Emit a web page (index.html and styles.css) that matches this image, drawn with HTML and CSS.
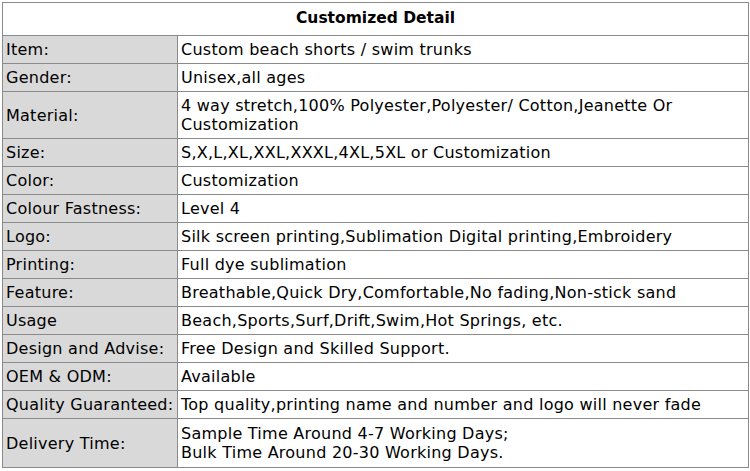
FILE: index.html
```html
<!DOCTYPE html>
<html>
<head>
<meta charset="utf-8">
<link rel="stylesheet" href="styles.css">
</head>
<body>
<table class="spec">
  <colgroup><col class="c1"><col class="c2"></colgroup>
  <tr><th class="head" colspan="2">Customized Detail</th></tr>
  <tr><td class="label">Item:</td><td class="value">Custom beach shorts / swim trunks</td></tr>
  <tr><td class="label">Gender:</td><td class="value">Unisex,all ages</td></tr>
  <tr class="double"><td class="label">Material:</td><td class="value">4 way stretch,100% Polyester,Polyester/ Cotton,Jeanette Or<br>Customization</td></tr>
  <tr><td class="label">Size:</td><td class="value">S,X,L,XL,XXL,XXXL,4XL,5XL or Customization</td></tr>
  <tr><td class="label">Color:</td><td class="value">Customization</td></tr>
  <tr><td class="label">Colour Fastness:</td><td class="value">Level 4</td></tr>
  <tr><td class="label">Logo:</td><td class="value">Silk screen printing,Sublimation Digital printing,Embroidery</td></tr>
  <tr><td class="label">Printing:</td><td class="value">Full dye sublimation</td></tr>
  <tr><td class="label">Feature:</td><td class="value">Breathable,Quick Dry,Comfortable,No fading,Non-stick sand</td></tr>
  <tr><td class="label">Usage</td><td class="value">Beach,Sports,Surf,Drift,Swim,Hot Springs, etc.</td></tr>
  <tr><td class="label">Design and Advise:</td><td class="value">Free Design and Skilled Support.</td></tr>
  <tr><td class="label">OEM &amp; ODM:</td><td class="value">Available</td></tr>
  <tr><td class="label">Quality Guaranteed:</td><td class="value">Top quality,printing name and number and logo will never fade</td></tr>
  <tr class="tall"><td class="label">Delivery Time:</td><td class="value">Sample Time Around 4-7 Working Days;<br>Bulk Time Around 20-30 Working Days.</td></tr>
</table>
</body>
</html>
```

FILE: styles.css
```css
html, body {
  margin: 0;
  padding: 0;
  background: #ffffff;
}
body {
  padding: 2px;
  font-family: "DejaVu Sans", Verdana, sans-serif;
  font-size: 16px;
  letter-spacing: 0.25px;
  color: #000000;
}
.spec {
  border-collapse: collapse;
  width: 746px;
  table-layout: fixed;
}
.spec .c1 {
  width: 175px;
}
.spec .c2 {
  width: 571px;
}
.spec th,
.spec td {
  border: 1px solid #8a8a8a;
  line-height: 19px;
  padding: 4px 3px;
  text-align: left;
  vertical-align: middle;
  white-space: nowrap;
}
.spec .head {
  text-align: center;
  font-weight: bold;
  font-size: 15.5px;
  letter-spacing: 0;
  padding: 6px 3px 7px;
  background: #ffffff;
}
.spec .label {
  background: #d9d9d9;
}
.spec .value {
  background: #ffffff;
}
.spec .tall td {
  padding-top: 5px;
  padding-bottom: 5px;
}
```
